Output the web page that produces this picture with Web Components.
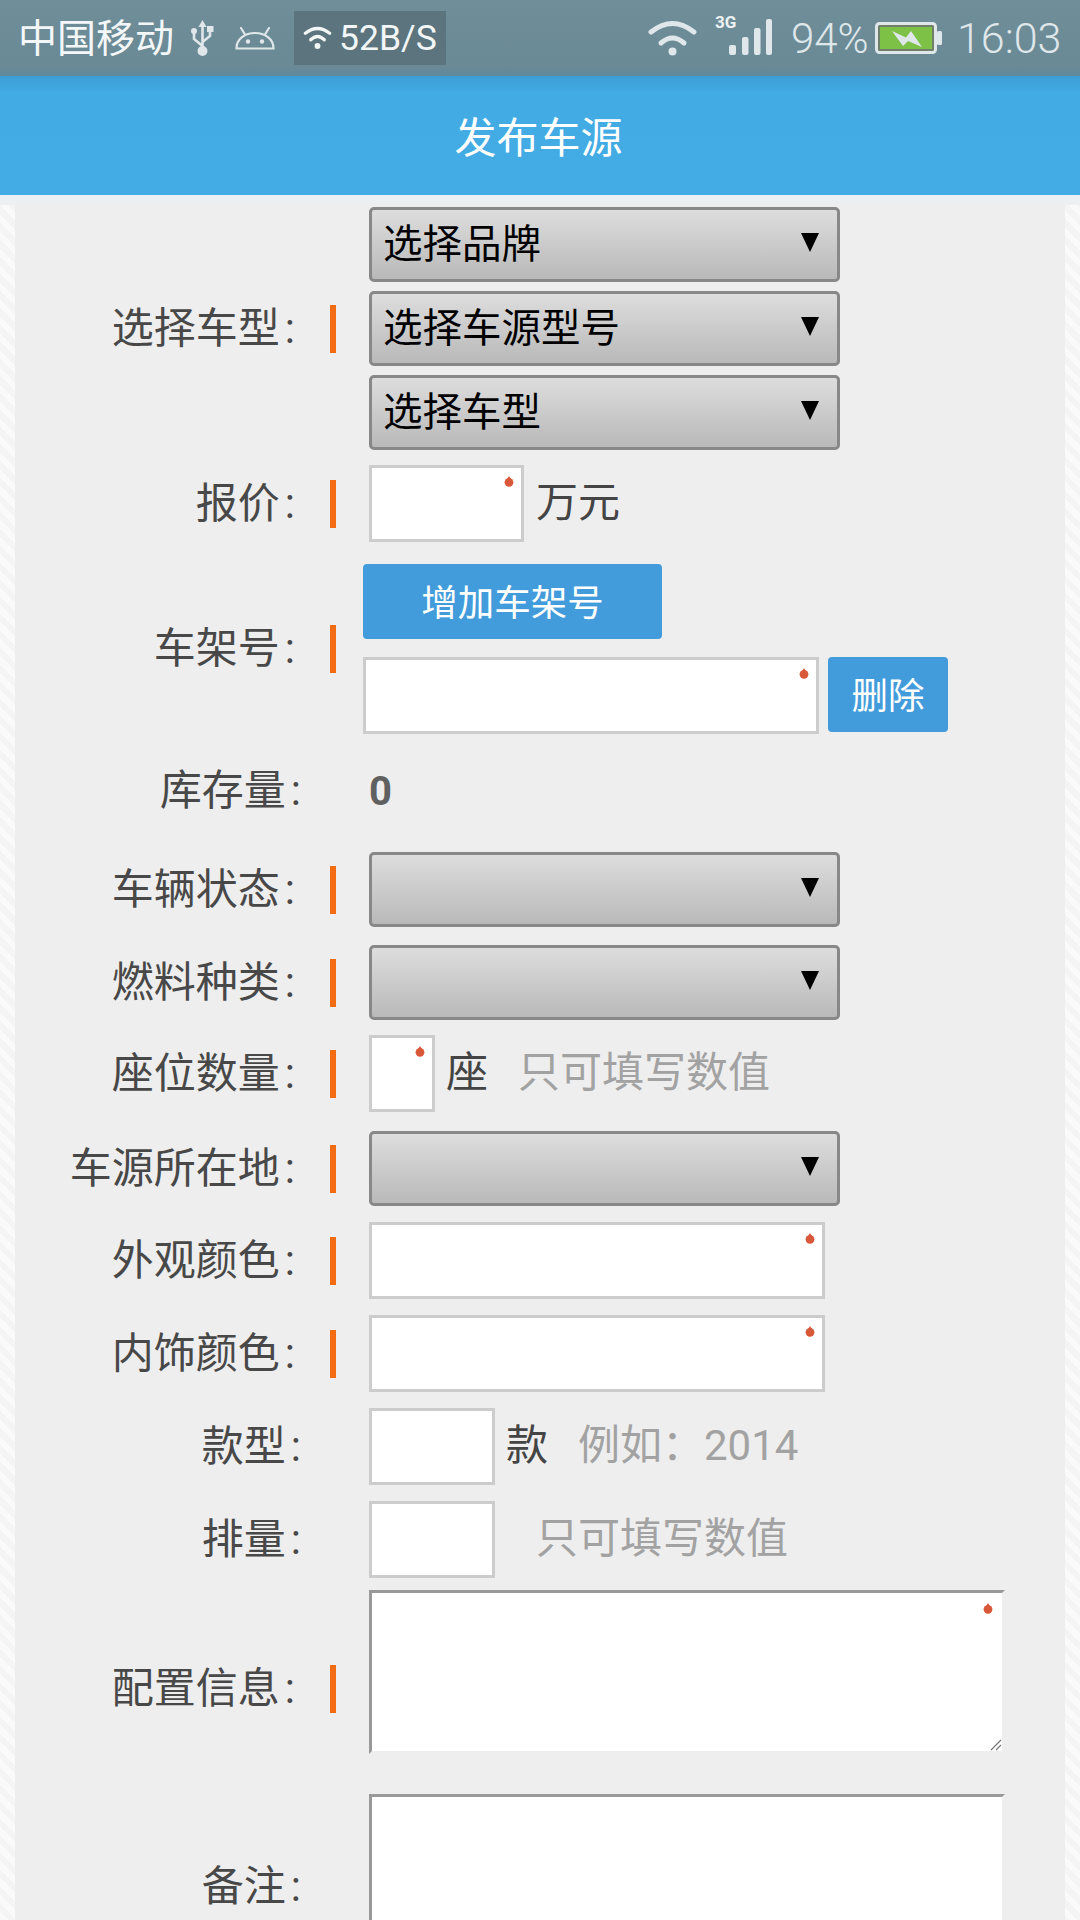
<!DOCTYPE html>
<html lang="zh">
<head>
<meta charset="utf-8">
<title>发布车源</title>
<style>
html, body { margin: 0; height: 1920px; overflow: hidden; background: #eee; }
body { font-family: Roboto, "Noto Sans CJK SC", sans-serif; }
form-page > form-row { margin-top: 16px; }
</style>
</head>
<body>
<status-bar></status-bar>
<app-bar>发布车源</app-bar>
<form-page>
  <form-row label="选择车型" marked style="margin-top:12px">
    <field-stack>
      <car-select>选择品牌</car-select>
      <car-select>选择车源型号</car-select>
      <car-select>选择车型</car-select>
    </field-stack>
  </form-row>
  <form-row label="报价" marked style="margin-top:15px">
    <text-field width="155" star></text-field>
    <unit-text style="margin-left:12px">万元</unit-text>
  </form-row>
  <form-row label="车架号" marked style="margin-top:22px">
    <vin-group></vin-group>
  </form-row>
  <form-row label="库存量" style="margin-top:28px">
    <stock-count>0</stock-count>
  </form-row>
  <form-row label="车辆状态" marked style="margin-top:32px"><car-select></car-select></form-row>
  <form-row label="燃料种类" marked style="margin-top:18px"><car-select></car-select></form-row>
  <form-row label="座位数量" marked style="margin-top:15px">
    <text-field width="66" star></text-field>
    <unit-text style="margin-left:11px">座</unit-text>
    <unit-text hint style="margin-left:30px">只可填写数值</unit-text>
  </form-row>
  <form-row label="车源所在地" marked style="margin-top:19px"><car-select></car-select></form-row>
  <form-row label="外观颜色" marked><text-field width="456" star></text-field></form-row>
  <form-row label="内饰颜色" marked><text-field width="456" star></text-field></form-row>
  <form-row label="款型">
    <text-field width="126"></text-field>
    <unit-text style="margin-left:11px">款</unit-text>
    <unit-text hint style="margin-left:30px">例如：2014</unit-text>
  </form-row>
  <form-row label="排量">
    <text-field width="126"></text-field>
    <unit-text hint style="margin-left:41px">只可填写数值</unit-text>
  </form-row>
  <form-row label="配置信息" marked style="margin-top:12px">
    <note-box star grip style="margin-bottom:33px"></note-box>
  </form-row>
  <form-row label="备注" style="margin-top:7px">
    <note-box style="height:186px"></note-box>
  </form-row>
</form-page>

<script>
const wifiIcon = (w, h, arcs, dot) => `
  <svg width="${w}" height="${h}" viewBox="0 0 49 36" fill="none" stroke="currentColor" stroke-linecap="round">
    ${arcs}
    <circle cx="24.5" cy="31.5" r="${dot}" fill="currentColor" stroke="none"/>
  </svg>`;

class StatusBar extends HTMLElement {
  constructor() {
    super();
    this.attachShadow({mode: "open"}).innerHTML = `
      <style>
        :host {
          display: flex;
          align-items: center;
          height: 76px;
          padding: 0 22px 0 18px;
          box-sizing: border-box;
          background: linear-gradient(#6f8e99, #698995 90%, #5f8a9e);
          color: #dfe7ea;
          font-family: Roboto, "Noto Sans CJK SC", sans-serif;
        }
        .carrier { font-size: 39px; line-height: 76px; color: #f4f7f8; width: 156px; white-space: nowrap; padding-top: 2px; }
        svg { display: block; flex: none; }
        .usb { margin-left: 16px; }
        .droid { margin-left: 20px; }
        .speed {
          display: flex; align-items: center; gap: 7px;
          margin-left: 19px; width: 152px; height: 54px; box-sizing: border-box;
          padding-left: 9px; background: #5b747d; color: #f2f6f7;
          font-size: 35.5px; white-space: nowrap;
        }
        .spacer { flex: 1; }
        .signal { margin-left: 18px; margin-top: -8px; }
        .level { margin-left: 19px; font-size: 42px; font-weight: 300; width: 76px; white-space: nowrap; }
        .battery { margin-left: 8px; }
        .clock { margin-left: 15px; font-size: 43px; font-weight: 300; width: 101px; white-space: nowrap; }
      </style>
      <span class="carrier">中国移动</span>
      <svg class="usb" width="25" height="36" viewBox="0 0 25 36" fill="none" stroke="#dfe7ea" stroke-width="2.6">
        <path d="M12.5 5V30M12.5 26L4 19V12M12.5 22L20 16V11"/>
        <path d="M12.5 0L16.5 7H8.5Z" fill="#dfe7ea" stroke="none"/>
        <circle cx="12.5" cy="31" r="5" fill="#dfe7ea" stroke="none"/>
        <circle cx="4" cy="11" r="3" fill="#dfe7ea" stroke="none"/>
        <rect x="17" y="6" width="6.5" height="6" fill="#dfe7ea" stroke="none"/>
      </svg>
      <svg class="droid" width="40" height="23" viewBox="0 0 40 23" fill="none" stroke="#dfe7ea" stroke-width="2.2">
        <path d="M1.5 21.5C1.5 12 10 6 20 6S38.5 12 38.5 21.5Z"/>
        <path d="M10 7.5L6 1M30 7.5L34 1" stroke-linecap="round"/>
        <circle cx="13" cy="14.5" r="2.2" fill="#dfe7ea" stroke="none"/>
        <circle cx="27" cy="14.5" r="2.2" fill="#dfe7ea" stroke="none"/>
      </svg>
      <div class="speed">
        ${wifiIcon(29, 26, `<path stroke-width="5.5" d="M4 10Q24.5 -6 45 10"/><path stroke-width="5.5" d="M13 21Q24.5 10 36 21"/>`, 5)}
        <span>52B/S</span>
      </div>
      <span class="spacer"></span>
      ${wifiIcon(49, 36, `<path stroke-width="5" d="M3 12Q24.5 -5 46 12"/><path stroke-width="5" d="M13 23Q24.5 13 36 23"/>`, 4)}
      <svg class="signal" width="57" height="42" viewBox="0 0 57 42" fill="#dfe7ea">
        <text x="0" y="15" font-family="Roboto, sans-serif" font-size="17" font-weight="700" fill="#eef2f3">3G</text>
        <rect x="14" y="32" width="7" height="10" rx="2"/>
        <rect x="27" y="24" width="6.5" height="18" rx="2"/>
        <rect x="39" y="15" width="6.5" height="27" rx="2"/>
        <rect x="51" y="6" width="6" height="36" rx="2"/>
      </svg>
      <span class="level">94%</span>
      <svg class="battery" width="67" height="32" viewBox="0 0 67 32">
        <rect x="1.5" y="1.5" width="59" height="29" rx="3" fill="#6f7f6a" stroke="#dfe7ea" stroke-width="3"/>
        <rect x="5" y="5" width="52" height="22" fill="#7dc246"/>
        <rect x="62" y="9" width="5" height="14" rx="1.5" fill="#dfe7ea"/>
        <path d="M17 9L31 15.5L36 9L47 25L33 19L28 24Z" fill="#dfe7ea"/>
      </svg>
      <span class="clock">16:03</span>`;
  }
}

class AppBar extends HTMLElement {
  constructor() {
    super();
    this.attachShadow({mode: "open"}).innerHTML = `
      <style>
        :host {
          display: flex;
          align-items: center;
          justify-content: center;
          height: 119px;
          box-sizing: border-box;
          padding: 0 3px 3px 0;
          background: linear-gradient(#3c9dd5, #43abe4 14%, #43ace5);
          color: #fff;
          font-family: "Noto Sans CJK SC", sans-serif;
          font-size: 42px;
        }
      </style>
      <slot></slot>`;
  }
}

class FormPage extends HTMLElement {
  constructor() {
    super();
    this.attachShadow({mode: "open"}).innerHTML = `
      <style>
        :host {
          display: block;
          height: 1725px;
          padding: 0 15px;
          overflow: hidden;
          background:
            linear-gradient(#e9f1f5, #eef0f0 10px, transparent 10px),
            repeating-linear-gradient(45deg, #fafafa 0 6px, #f4f4f4 6px 12px);
        }
        .sheet {
          display: flow-root;
          height: 100%;
          background: linear-gradient(#e9f1f5, #eeeeee 10px);
        }
      </style>
      <div class="sheet"><slot></slot></div>`;
  }
}

class FormRow extends HTMLElement {
  constructor() {
    super();
    const marked = this.hasAttribute("marked");
    this.attachShadow({mode: "open"}).innerHTML = `
      <style>
        :host {
          display: flex;
          align-items: center;
          color: #484848;
          font-family: Roboto, "Noto Sans CJK SC", sans-serif;
          font-size: 42px;
        }
        .label {
          flex: none;
          box-sizing: border-box;
          width: ${marked ? 280 : 286}px;
          line-height: 50px;
          text-align: right;
          white-space: nowrap;
        }
        .colon { margin-left: 5px; }
        .mark {
          flex: none;
          width: 6px;
          height: 48px;
          margin: 0 33px 0 35px;
          background: #f26c13;
        }
        .gap { flex: none; width: 68px; }
        .controls { display: flex; align-items: center; min-width: 0; }
      </style>
      <span class="label">${this.getAttribute("label")}<span class="colon">:</span></span>
      ${marked ? '<span class="mark"></span>' : '<span class="gap"></span>'}
      <div class="controls"><slot></slot></div>`;
  }
}

class FieldStack extends HTMLElement {
  constructor() {
    super();
    this.attachShadow({mode: "open"}).innerHTML = `
      <style>:host { display: flex; flex-direction: column; gap: 9px; }</style>
      <slot></slot>`;
  }
}

class CarSelect extends HTMLElement {
  constructor() {
    super();
    this.attachShadow({mode: "open"}).innerHTML = `
      <style>
        :host {
          display: flex;
          align-items: center;
          justify-content: space-between;
          width: 471px;
          height: 75px;
          box-sizing: border-box;
          padding: 0 18px 0 11px;
          border: 3px solid #888;
          border-radius: 5px;
          background: linear-gradient(#dddddd, #b9b9b9);
          color: #000;
          font-family: "Noto Sans CJK SC", sans-serif;
          font-size: 39.5px;
          white-space: nowrap;
        }
        span { padding-bottom: 9px; }
        svg { flex: none; margin-bottom: 4px; }
      </style>
      <span><slot></slot></span>
      <svg width="18" height="19" viewBox="0 0 18 19"><path d="M0 0H18L9 19Z"/></svg>`;
  }
}

const starMark = `<svg class="star" width="10" height="11" viewBox="0 0 10 11"><circle cx="5" cy="6.3" r="4.4" fill="#d9583a"/><path d="M5 0L7.5 4H2.5Z" fill="#d9583a"/></svg>`;

class TextField extends HTMLElement {
  constructor() {
    super();
    this.attachShadow({mode: "open"}).innerHTML = `
      <style>
        :host {
          display: block;
          position: relative;
          flex: none;
          width: ${this.getAttribute("width")}px;
          height: 77px;
          box-sizing: border-box;
          border: 3px solid #ccc;
          background: #fff;
        }
        .star { position: absolute; top: 8px; right: 7px; }
      </style>
      ${this.hasAttribute("star") ? starMark : ""}`;
  }
}

class UnitText extends HTMLElement {
  constructor() {
    super();
    this.attachShadow({mode: "open"}).innerHTML = `
      <style>
        :host { display: block; flex: none; white-space: nowrap; color: #444; font-size: 42px; padding-bottom: 10px; }
        :host([hint]) { color: #a2a2a2; }
      </style>
      <slot></slot>`;
  }
}

class ActionButton extends HTMLElement {
  constructor() {
    super();
    this.attachShadow({mode: "open"}).innerHTML = `
      <style>
        :host {
          display: flex;
          align-items: center;
          justify-content: center;
          height: 75px;
          box-sizing: border-box;
          padding-bottom: 3px;
          border-radius: 4px;
          background: #429cdb;
          color: #fff;
          font-family: "Noto Sans CJK SC", sans-serif;
          font-size: 36.5px;
        }
      </style>
      <slot></slot>`;
  }
}

class VinGroup extends HTMLElement {
  constructor() {
    super();
    this.attachShadow({mode: "open"}).innerHTML = `
      <style>
        :host { display: flex; flex-direction: column; gap: 18px; margin-left: -6px; }
        .add { width: 299px; }
        .line { display: flex; align-items: flex-start; gap: 9px; }
        .del { width: 120px; }
      </style>
      <action-button class="add">增加车架号</action-button>
      <div class="line">
        <text-field width="456" star></text-field>
        <action-button class="del">删除</action-button>
      </div>`;
  }
}

class StockCount extends HTMLElement {
  constructor() {
    super();
    this.attachShadow({mode: "open"}).innerHTML = `
      <style>
        :host { display: block; height: 58px; line-height: 60px; color: #606060; font-size: 40px; font-weight: 700; }
      </style>
      <slot></slot>`;
  }
}

class NoteBox extends HTMLElement {
  constructor() {
    super();
    this.attachShadow({mode: "open"}).innerHTML = `
      <style>
        :host {
          display: block;
          position: relative;
          flex: none;
          width: 636px;
          height: 164px;
          box-sizing: border-box;
          border: 3px solid;
          border-color: #999 #eee #eee #999;
          background: #fff;
        }
        .star { position: absolute; top: 10px; right: 9px; }
        .grip { position: absolute; right: 0; bottom: 0; }
      </style>
      ${this.hasAttribute("star") ? starMark : ""}
      ${this.hasAttribute("grip") ? `<svg class="grip" width="12" height="12" viewBox="0 0 12 12" stroke="#777" stroke-width="1.2" fill="none"><path d="M1 11L11 1M6 11L11 6"/></svg>` : ""}`;
  }
}

customElements.define("status-bar", StatusBar);
customElements.define("app-bar", AppBar);
customElements.define("form-page", FormPage);
customElements.define("form-row", FormRow);
customElements.define("field-stack", FieldStack);
customElements.define("car-select", CarSelect);
customElements.define("text-field", TextField);
customElements.define("unit-text", UnitText);
customElements.define("action-button", ActionButton);
customElements.define("vin-group", VinGroup);
customElements.define("stock-count", StockCount);
customElements.define("note-box", NoteBox);
</script>
</body>
</html>
